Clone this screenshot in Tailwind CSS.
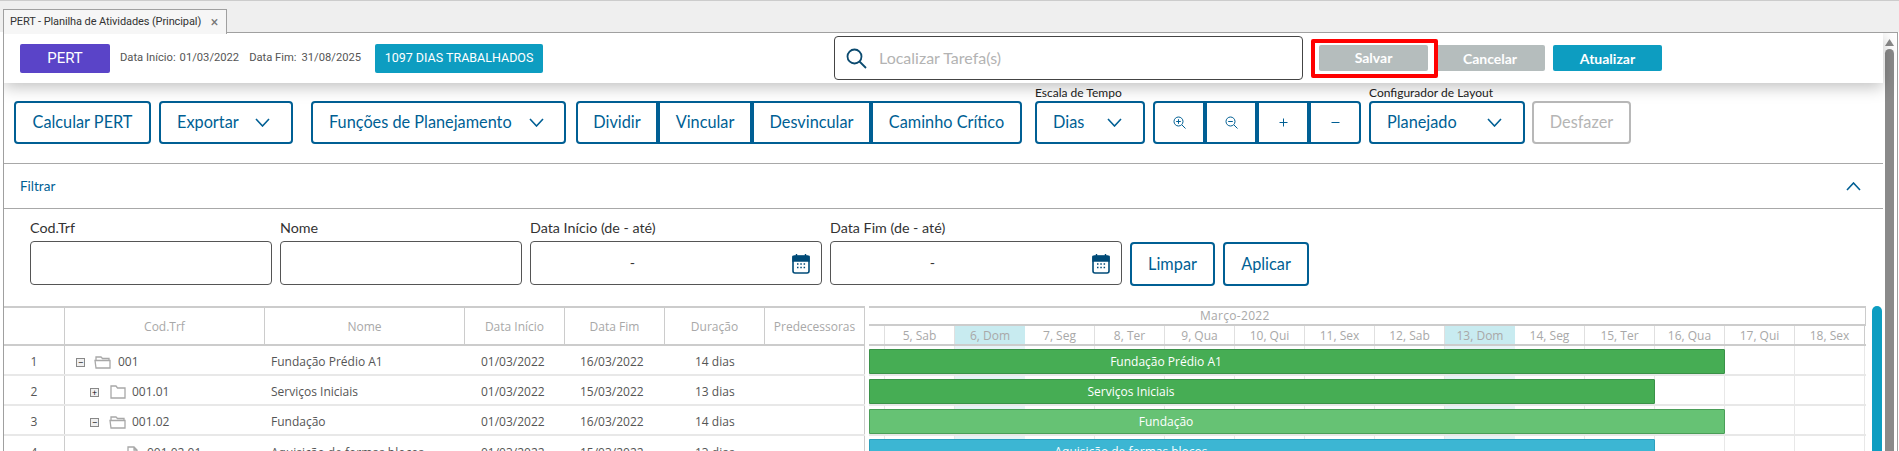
<!DOCTYPE html>
<html lang="pt-BR">
  <head>
    <meta charset="UTF-8" />
    <meta name="viewport" content="width=device-width, initial-scale=1.0" />
    <title>PERT - Planilha de Atividades</title>
    <script src="https://cdn.jsdelivr.net/npm/@tailwindcss/browser@4"></script>
  </head>
  <body class="h-[451px] overflow-hidden bg-white font-['Lato',sans-serif] text-[#333]">
    <!-- tab strip -->
    <div class="h-[32px] bg-[#efefef] border-t border-[#cccccc] pl-[3px] pt-[8px] flex">
      <div class="relative z-20 w-[224px] h-[25px] bg-[#f6f6f6] border border-b-0 border-[#a0a0a0] flex items-center justify-between pl-[6px] pr-[8px] font-['Roboto',sans-serif] text-[11px] tracking-[-0.1px] text-[#333]">
        <span>PERT - Planilha de Atividades (Principal)</span>
        <span class="text-[14px] leading-none text-[#777]">×</span>
      </div>
    </div>

    <div class="ml-[3px] mr-[1px] h-[419px] border border-b-0 border-[#a0a0a0] flex overflow-hidden">
      <div class="flex-1 min-w-0">
        <!-- header -->
        <div class="relative z-10 h-[50px] bg-white shadow-[0_4px_16px_rgba(0,0,0,0.25)] flex items-center">
          <div class="ml-[16px] w-[90px] h-[29px] rounded-[2px] bg-[#5a44c8] text-white text-[15px] font-['Roboto',sans-serif] flex items-center justify-center">PERT</div>
          <div class="ml-[10px] w-[255px] flex font-['Roboto',sans-serif] text-[11.2px] text-[#555]">
            <span>Data Início:</span><span class="ml-[4px]">01/03/2022</span>
            <span class="ml-[10px]">Data Fim:</span><span class="ml-[5px]">31/08/2025</span>
          </div>
          <div class="w-[168px] h-[29px] rounded-[2px] bg-[#0d9dc1] text-white text-[12.5px] font-['Roboto',sans-serif] flex items-center justify-center">1097 DIAS TRABALHADOS</div>
          <div class="ml-[291px] w-[469px] h-[44px] rounded-[4px] border border-[#444] flex items-center pl-[11px]">
            <svg class="w-[21px] h-[21px]" viewBox="0 0 21 21" fill="none" stroke="#0b4a6f" stroke-width="1.8">
              <circle cx="8.5" cy="8.5" r="7" />
              <path d="M13.5 13.5 L20 20" />
            </svg>
            <span class="ml-[12px] text-[16px] text-[#b3b3b3]">Localizar Tarefa(s)</span>
          </div>
          <div class="relative z-10 ml-[8px] h-[39px] w-[127px] rounded-[2px] border-4 border-[#ff0000] bg-white pl-[4px] pt-[2px]">
            <div class="w-[109px] h-[26px] rounded-[2px] bg-[#b5bdbd] text-white text-[14px] font-bold flex items-center justify-center">Salvar</div>
          </div>
          <div class="-ml-[3px] w-[110px] h-[26px] rounded-[2px] bg-[#b5bdbd] text-white text-[14px] font-bold flex items-center justify-center">Cancelar</div>
          <div class="ml-[8px] w-[109px] h-[26px] rounded-[2px] bg-[#0d9dc1] text-white text-[14px] font-bold flex items-center justify-center">Atualizar</div>
        </div>

        <!-- toolbar -->
        <div class="h-[81px] border-b border-[#a8a8a8] pl-[10px] pb-[19px] flex items-end text-[16.3px] text-[#005f94]">
          <button class="w-[137px] h-[43px] rounded-[4px] border-2 border-[#005f94]">Calcular PERT</button>
          <button class="ml-[8px] w-[134px] h-[43px] rounded-[4px] border-2 border-[#005f94] flex items-center justify-between pl-[16px] pr-[21px]">
            Exportar
            <svg class="w-[15px] h-[9px]" viewBox="0 0 15 9" fill="none" stroke="#005f94" stroke-width="1.6"><path d="M1 1 L7.5 8 L14 1" /></svg>
          </button>
          <button class="ml-[18px] w-[255px] h-[43px] rounded-[4px] border-2 border-[#005f94] flex items-center justify-between pl-[16px] pr-[20px]">
            Funções de Planejamento
            <svg class="w-[15px] h-[9px]" viewBox="0 0 15 9" fill="none" stroke="#005f94" stroke-width="1.6"><path d="M1 1 L7.5 8 L14 1" /></svg>
          </button>
          <div class="ml-[10px] flex">
            <button class="w-[82px] h-[43px] rounded-l-[4px] border-2 border-[#005f94]">Dividir</button>
            <button class="w-[94px] h-[43px] border-2 border-[#005f94]">Vincular</button>
            <button class="w-[119px] h-[43px] border-2 border-[#005f94]">Desvincular</button>
            <button class="w-[151px] h-[43px] rounded-r-[4px] border-2 border-[#005f94]">Caminho Crítico</button>
          </div>
          <div class="ml-[13px] flex flex-col">
            <span class="text-[12px] leading-[15px] mb-[1px] text-[#222]">Escala de Tempo</span>
            <button class="w-[110px] h-[43px] rounded-[4px] border-2 border-[#005f94] flex items-center justify-between pl-[16px] pr-[21px]">
              Dias
              <svg class="w-[15px] h-[9px]" viewBox="0 0 15 9" fill="none" stroke="#005f94" stroke-width="1.6"><path d="M1 1 L7.5 8 L14 1" /></svg>
            </button>
          </div>
          <div class="ml-[8px] flex">
            <button class="w-[52px] h-[43px] rounded-l-[4px] border-2 border-[#005f94] flex items-center justify-center">
              <svg class="w-[13px] h-[13px]" viewBox="0 0 13 13" fill="none" stroke="#005f94" stroke-width="1"><circle cx="5.5" cy="5.5" r="4.5" /><path d="M9 9 L12.5 12.5 M3.2 5.5 H7.8 M5.5 3.2 V7.8" /></svg>
            </button>
            <button class="w-[52px] h-[43px] border-2 border-[#005f94] flex items-center justify-center">
              <svg class="w-[13px] h-[13px]" viewBox="0 0 13 13" fill="none" stroke="#005f94" stroke-width="1"><circle cx="5.5" cy="5.5" r="4.5" /><path d="M9 9 L12.5 12.5 M3.2 5.5 H7.8" /></svg>
            </button>
            <button class="w-[52px] h-[43px] border-2 border-[#005f94] flex items-center justify-center">
              <svg class="w-[9px] h-[9px]" viewBox="0 0 9 9" fill="none" stroke="#005f94" stroke-width="1"><path d="M0.5 4.5 H8.5 M4.5 0.5 V8.5" /></svg>
            </button>
            <button class="w-[52px] h-[43px] rounded-r-[4px] border-2 border-[#005f94] flex items-center justify-center">
              <svg class="w-[9px] h-[9px]" viewBox="0 0 9 9" fill="none" stroke="#005f94" stroke-width="1"><path d="M0.5 4.5 H8.5" /></svg>
            </button>
          </div>
          <div class="ml-[8px] flex flex-col">
            <span class="text-[12px] leading-[15px] mb-[1px] text-[#222]">Configurador de Layout</span>
            <button class="w-[156px] h-[43px] rounded-[4px] border-2 border-[#005f94] flex items-center justify-between pl-[16px] pr-[21px]">
              Planejado
              <svg class="w-[15px] h-[9px]" viewBox="0 0 15 9" fill="none" stroke="#005f94" stroke-width="1.6"><path d="M1 1 L7.5 8 L14 1" /></svg>
            </button>
          </div>
          <button class="ml-[7px] w-[99px] h-[43px] rounded-[4px] border-2 border-[#b8b8b8] text-[#b5b5b5]">Desfazer</button>
        </div>

        <!-- filter heading -->
        <div class="h-[45px] border-b border-[#a8a8a8] pl-[16px] pr-[22px] flex items-center justify-between">
          <span class="text-[13.5px] text-[#005f94]">Filtrar</span>
          <svg class="w-[15px] h-[9px]" viewBox="0 0 15 9" fill="none" stroke="#005f94" stroke-width="1.6"><path d="M1 8 L7.5 1 L14 8" /></svg>
        </div>

        <!-- filter form -->
        <div class="h-[97px] pl-[26px] pt-[11px] flex gap-[8px] text-[14.3px] text-[#333]">
          <div class="w-[242px]">
            <div class="h-[21px] leading-[15px]">Cod.Trf</div>
            <div class="h-[44px] rounded-[4px] border border-[#555]"></div>
          </div>
          <div class="w-[242px]">
            <div class="h-[21px] leading-[15px]">Nome</div>
            <div class="h-[44px] rounded-[4px] border border-[#555]"></div>
          </div>
          <div class="w-[292px]">
            <div class="h-[21px] leading-[15px]">Data Início (de - até)</div>
            <div class="h-[44px] rounded-[4px] border border-[#555] flex items-center justify-end pr-[11px]">
              <span class="pr-[157px]">-</span>
              <svg class="w-[18px] h-[21px] shrink-0" viewBox="0 0 18 21" fill="none">
                <rect x="1" y="3" width="16" height="17" rx="2" stroke="#004b78" stroke-width="1.6" />
                <path d="M1 3.5 H17 V8 H1 Z M4.5 1 V4 M13.5 1 V4" fill="#004b78" stroke="#004b78" stroke-width="1.4" />
                <path d="M5 11 H6.5 M8.3 11 H9.8 M11.6 11 H13.1 M5 14.5 H6.5 M8.3 14.5 H9.8 M11.6 14.5 H13.1" stroke="#004b78" stroke-width="1.6" />
              </svg>
            </div>
          </div>
          <div class="w-[292px]">
            <div class="h-[21px] leading-[15px]">Data Fim (de - até)</div>
            <div class="h-[44px] rounded-[4px] border border-[#555] flex items-center justify-end pr-[11px]">
              <span class="pr-[157px]">-</span>
              <svg class="w-[18px] h-[21px] shrink-0" viewBox="0 0 18 21" fill="none">
                <rect x="1" y="3" width="16" height="17" rx="2" stroke="#004b78" stroke-width="1.6" />
                <path d="M1 3.5 H17 V8 H1 Z M4.5 1 V4 M13.5 1 V4" fill="#004b78" stroke="#004b78" stroke-width="1.4" />
                <path d="M5 11 H6.5 M8.3 11 H9.8 M11.6 11 H13.1 M5 14.5 H6.5 M8.3 14.5 H9.8 M11.6 14.5 H13.1" stroke="#004b78" stroke-width="1.6" />
              </svg>
            </div>
          </div>
          <button class="mt-[22px] w-[85px] h-[44px] rounded-[4px] border-2 border-[#005f94] text-[16.3px] text-[#005f94]">Limpar</button>
          <button class="mt-[22px] w-[86px] h-[44px] rounded-[4px] border-2 border-[#005f94] text-[16.3px] text-[#005f94]">Aplicar</button>
        </div>

        <!-- table and gantt -->
        <div class="flex font-['Open_Sans',sans-serif] text-[12px]">
          <!-- task table -->
          <div class="w-[861px] shrink-0 border-t-2 border-[#cccccc]">
            <div class="h-[38px] grid grid-cols-[61px_200px_200px_100px_100px_100px_100px] border-b-2 border-[#cccccc] text-[#a8a8a8] text-center items-stretch [&>div]:pt-[2px]">
              <div class="border-r border-[#cccccc]"></div>
              <div class="border-r border-[#cccccc] flex items-center justify-center">Cod.Trf</div>
              <div class="border-r border-[#cccccc] flex items-center justify-center">Nome</div>
              <div class="border-r border-[#cccccc] flex items-center justify-center">Data Início</div>
              <div class="border-r border-[#cccccc] flex items-center justify-center">Data Fim</div>
              <div class="border-r border-[#cccccc] flex items-center justify-center">Duração</div>
              <div class="border-r border-[#cccccc] flex items-center justify-center">Predecessoras</div>
            </div>

            <div class="h-[30px] grid grid-cols-[61px_200px_200px_100px_100px_100px_100px] border-b-2 border-[#e8e8e8] text-[#555] items-center [&>div]:pt-[4px]">
              <div class="h-full border-r border-[#cccccc] flex items-center justify-center">1</div>
              <div class="flex items-center pl-[11px]">
                <span class="w-[9px] h-[9px] border border-[#888] bg-[#f0f0f0] flex items-center justify-center text-[9px] leading-none text-black">−</span>
                <svg class="ml-[9px] w-[17px] h-[14px]" viewBox="0 0 17 14" fill="none" stroke="#a8a8a8" stroke-width="1.3"><path d="M2 5 V2 H7 L8.5 3.5 H15 V5 M1 5.5 H16 V13 H2 L1 5.5 Z" /></svg>
                <span class="ml-[7px]">001</span>
              </div>
              <div class="pl-[6px]">Fundação Prédio A1</div>
              <div class="pl-[16px]">01/03/2022</div>
              <div class="pl-[15px]">16/03/2022</div>
              <div class="pl-[30px]">14 dias</div>
              <div class="h-full border-r border-[#cccccc]"></div>
            </div>

            <div class="h-[30px] grid grid-cols-[61px_200px_200px_100px_100px_100px_100px] border-b-2 border-[#e8e8e8] text-[#555] items-center [&>div]:pt-[4px]">
              <div class="h-full border-r border-[#cccccc] flex items-center justify-center">2</div>
              <div class="flex items-center pl-[25px]">
                <span class="w-[9px] h-[9px] border border-[#888] bg-[#f0f0f0] flex items-center justify-center text-[9px] leading-none text-black">+</span>
                <svg class="ml-[11px] w-[16px] h-[14px]" viewBox="0 0 16 14" fill="none" stroke="#a8a8a8" stroke-width="1.3"><path d="M1 13 V1 H6 L7.5 3 H15 V13 Z" /></svg>
                <span class="ml-[6px]">001.01</span>
              </div>
              <div class="pl-[6px]">Serviços Iniciais</div>
              <div class="pl-[16px]">01/03/2022</div>
              <div class="pl-[15px]">15/03/2022</div>
              <div class="pl-[30px]">13 dias</div>
              <div class="h-full border-r border-[#cccccc]"></div>
            </div>

            <div class="h-[30px] grid grid-cols-[61px_200px_200px_100px_100px_100px_100px] border-b-2 border-[#e8e8e8] text-[#555] items-center [&>div]:pt-[4px]">
              <div class="h-full border-r border-[#cccccc] flex items-center justify-center">3</div>
              <div class="flex items-center pl-[25px]">
                <span class="w-[9px] h-[9px] border border-[#888] bg-[#f0f0f0] flex items-center justify-center text-[9px] leading-none text-black">−</span>
                <svg class="ml-[10px] w-[17px] h-[14px]" viewBox="0 0 17 14" fill="none" stroke="#a8a8a8" stroke-width="1.3"><path d="M2 5 V2 H7 L8.5 3.5 H15 V5 M1 5.5 H16 V13 H2 L1 5.5 Z" /></svg>
                <span class="ml-[6px]">001.02</span>
              </div>
              <div class="pl-[6px]">Fundação</div>
              <div class="pl-[16px]">01/03/2022</div>
              <div class="pl-[15px]">16/03/2022</div>
              <div class="pl-[30px]">14 dias</div>
              <div class="h-full border-r border-[#cccccc]"></div>
            </div>

            <div class="h-[30px] grid grid-cols-[61px_200px_200px_100px_100px_100px_100px] text-[#555] items-center [&>div]:pt-[4px]">
              <div class="h-full border-r border-[#cccccc] flex items-center justify-center">4</div>
              <div class="flex items-center pl-[62px]">
                <svg class="w-[11px] h-[14px]" viewBox="0 0 11 14" fill="none" stroke="#a8a8a8" stroke-width="1.3"><path d="M1 1 H7 L10 4 V13 H1 Z M7 1 V4 H10" /></svg>
                <span class="ml-[9px]">001.02.01</span>
              </div>
              <div class="pl-[6px]">Aquisição de formas blocos</div>
              <div class="pl-[16px]">01/03/2022</div>
              <div class="pl-[15px]">15/03/2022</div>
              <div class="pl-[30px]">13 dias</div>
              <div class="h-full border-r border-[#cccccc]"></div>
            </div>
          </div>

          <!-- gantt -->
          <div class="ml-[4px] w-[997px] shrink-0 border-t-2 border-[#cccccc]">
            <div class="h-[18px] border-b-2 border-r border-[#cccccc] text-[#a8a8a8] tracking-[0.3px] leading-[16px] pl-[331px]">Março-2022</div>
            <div class="h-[20px] flex border-b-2 border-[#cccccc] text-[#a8a8a8] text-center leading-[20px]">
              <div class="w-[16px] border-r border-[#e0e0e0]"></div>
              <div class="w-[70px] border-r border-[#e0e0e0]">5, Sab</div>
              <div class="w-[70px] bg-[#c8ebf0]">6, Dom</div>
              <div class="w-[70px] border-r border-[#e0e0e0]">7, Seg</div>
              <div class="w-[70px] border-r border-[#e0e0e0]">8, Ter</div>
              <div class="w-[70px] border-r border-[#e0e0e0]">9, Qua</div>
              <div class="w-[70px] border-r border-[#e0e0e0]">10, Qui</div>
              <div class="w-[70px] border-r border-[#e0e0e0]">11, Sex</div>
              <div class="w-[70px] border-r border-[#e0e0e0]">12, Sab</div>
              <div class="w-[70px] bg-[#c8ebf0]">13, Dom</div>
              <div class="w-[70px] border-r border-[#e0e0e0]">14, Seg</div>
              <div class="w-[70px] border-r border-[#e0e0e0]">15, Ter</div>
              <div class="w-[70px] border-r border-[#e0e0e0]">16, Qua</div>
              <div class="w-[70px] border-r border-[#e0e0e0]">17, Qui</div>
              <div class="w-[70px] border-r border-[#cccccc]">18, Sex</div>
            </div>

            <div class="relative h-[120px] text-white">
              <!-- grid columns behind the bars -->
              <div class="absolute inset-0 flex">
                <div class="w-[16px] border-r border-[#e8e8e8]"></div>
                <div class="w-[70px] border-r border-[#e8e8e8]"></div>
                <div class="w-[70px] bg-[#e8f4f7]"></div>
                <div class="w-[70px] border-r border-[#e8e8e8]"></div>
                <div class="w-[70px] border-r border-[#e8e8e8]"></div>
                <div class="w-[70px] border-r border-[#e8e8e8]"></div>
                <div class="w-[70px] border-r border-[#e8e8e8]"></div>
                <div class="w-[70px] border-r border-[#e8e8e8]"></div>
                <div class="w-[70px] border-r border-[#e8e8e8]"></div>
                <div class="w-[70px] bg-[#e8f4f7]"></div>
                <div class="w-[70px] border-r border-[#e8e8e8]"></div>
                <div class="w-[70px] border-r border-[#e8e8e8]"></div>
                <div class="w-[70px] border-r border-[#e8e8e8]"></div>
                <div class="w-[70px] border-r border-[#e8e8e8]"></div>
                <div class="w-[70px] border-r border-[#e8e8e8]"></div>
              </div>

              <div class="relative h-[30px] border-b-2 border-[#e8e8e8] pt-[3px]">
                <div class="w-[856px] h-[25px] rounded-r-[1px] bg-[#46ad54] border border-[#3a9148] flex items-center justify-center pr-[262px]">Fundação Prédio A1</div>
              </div>
              <div class="relative h-[30px] border-b-2 border-[#e8e8e8] pt-[3px]">
                <div class="w-[786px] h-[25px] rounded-r-[1px] bg-[#46ad54] border border-[#3a9148] flex items-center justify-center pr-[262px]">Serviços Iniciais</div>
              </div>
              <div class="relative h-[30px] border-b-2 border-[#e8e8e8] pt-[3px]">
                <div class="w-[856px] h-[25px] rounded-r-[1px] bg-[#66c274] border border-[#4a9e58] flex items-center justify-center pr-[262px]">Fundação</div>
              </div>
              <div class="relative h-[30px] pt-[3px]">
                <div class="w-[786px] h-[25px] rounded-r-[1px] bg-[#3cb6d3] border border-[#2ca0bd] flex items-center justify-center pr-[262px]">Aquisição de formas blocos</div>
              </div>
            </div>
          </div>

          <!-- inner scrollbar thumb -->
          <div class="ml-[6px] w-[10px] h-[200px] rounded-t-full bg-[#0d9dc1]"></div>
        </div>
      </div>

      <!-- page scrollbar -->
      <div class="w-[14px] shrink-0 bg-white pl-[2px] pt-[6px]">
        <svg class="w-[9px] h-[7px]" viewBox="0 0 9 7" fill="#8a8a8a"><path d="M4.5 0 L9 7 H0 Z" /></svg>
        <div class="mt-[3px] w-[9px] h-[420px] rounded-t-full bg-[#8a8a8a]"></div>
      </div>
    </div>
  </body>
</html>
